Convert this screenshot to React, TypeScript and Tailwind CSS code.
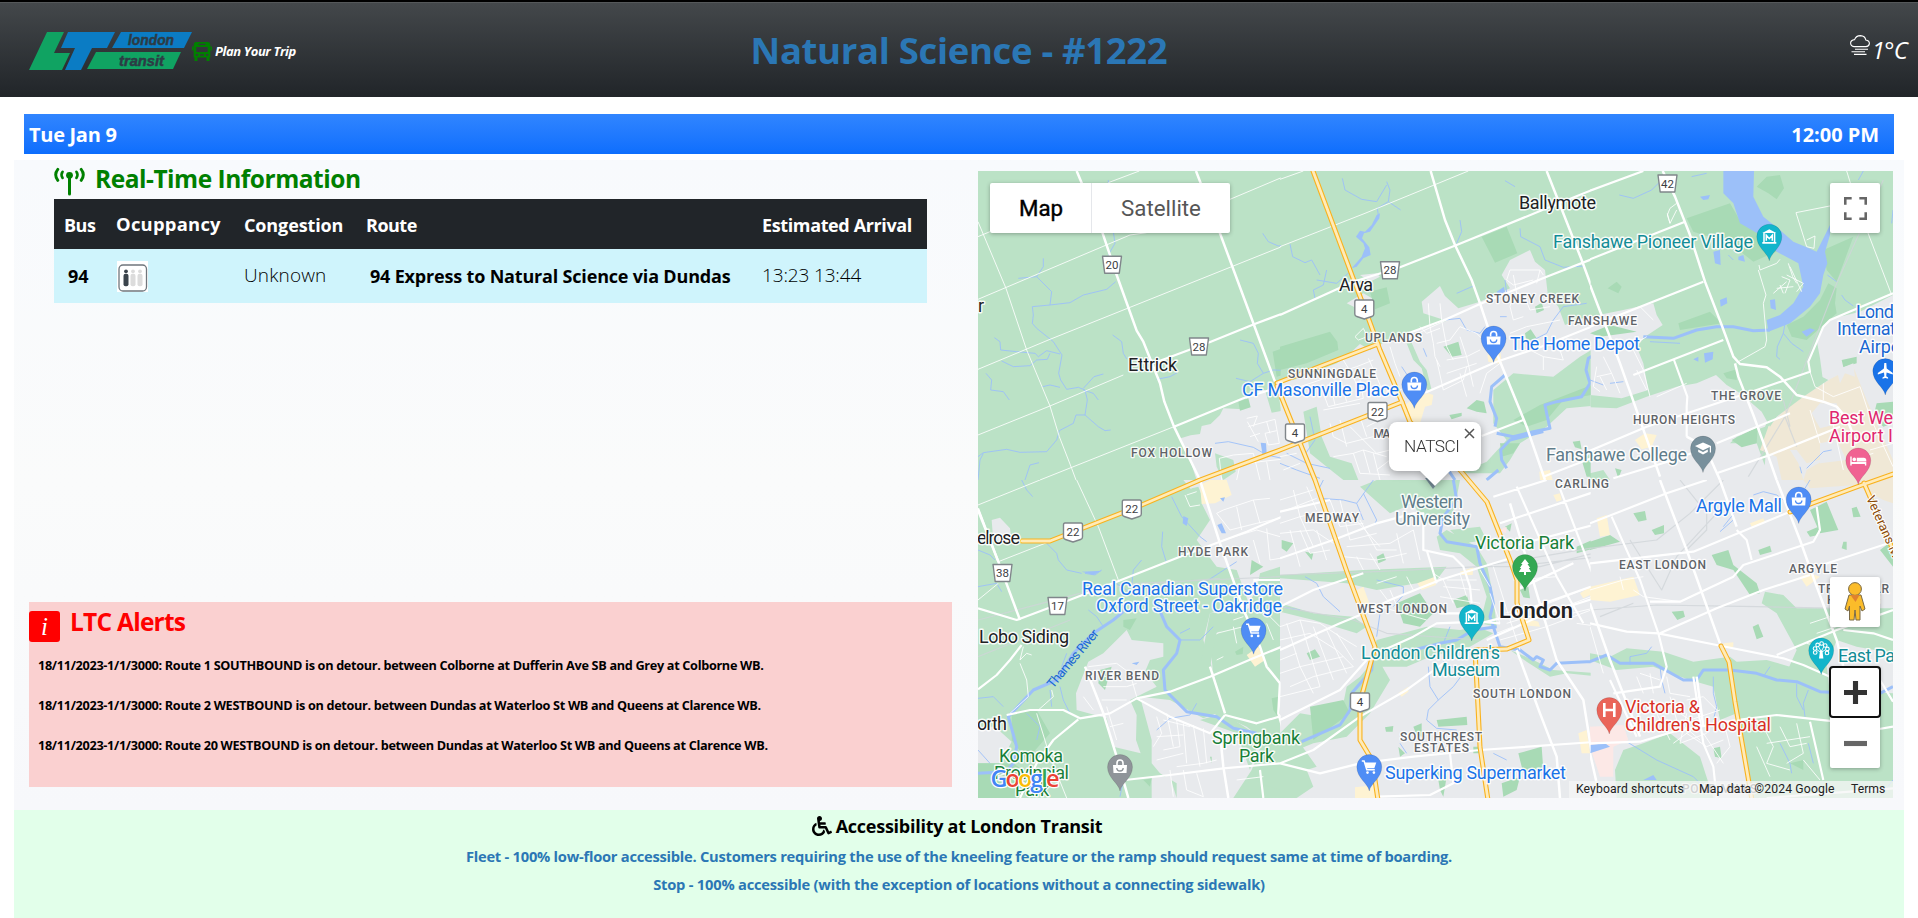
import type { ReactNode } from "react";
import { FaWheelchair } from "react-icons/fa";

/* ---------- Map data: each tile is drawn at 3 units per pixel ---------- */

type Tile = {
  x: number;
  y: number;
  w: number;
  h: number;
  urban?: string;
  green?: string;
  park?: string;
  beige?: string;
  pink?: string;
  sand?: string;
  grey?: string;
  lake?: string;
  river?: string;
  creek?: string;
  rail?: string;
  minor?: string;
  thin?: string;
  mid?: string;
  major?: string;
};

const tiles: Tile[] = [
  {
    x: 970, y: 160, w: 930, h: 960,
    urban: "M632 835L662 826 690 822 695 798 722 792 750 765 760 745 820 748 830 712 860 690 890 690 960 655V960H680L660 900Z",
    green: "M885 690L925 700 950 750 905 758Z M735 880L790 900 797 935 760 960 740 920Z",
    park: "M908 575L960 557V640L920 650Z M805 725L835 715 842 742 810 752Z",
    lake: "M872 848L888 850 890 882 878 886Z",
    thin: "M24 418L480 225 530 218 M24 628L240 538 480 442 960 250 M24 825L240 738 460 645 M210 960L612 800 M24 185L108 385 170 570 240 738 268 830 305 925 318 960 M415 68L508 33 M780 118L960 42 M24 230L60 215",
    creek: "M24 890L40 878 110 868 150 877 230 875 260 840 268 812 310 790 318 765 345 765 385 800 405 812 422 810 M345 765L352 720 345 690 325 682 290 688 272 660 266 640 276 585 250 545 200 505 187 490 190 465 187 440 240 435 300 428 340 405 410 388 437 365 M145 355L200 350 220 320 220 295 M200 350L245 395 240 435 M73 533L90 545 92 570 140 575 195 580 205 590 230 572 270 582 M95 603L130 620 180 617 200 600 232 598 240 580 M48 640L65 660 62 690 100 695 118 720 M428 525L455 545 460 580 470 597 M340 685L372 650 400 642 M340 690L370 700 385 720 M218 680L240 675 270 682 M415 60V70 M415 285L435 250 430 215 M810 540L850 550 865 580 862 610 880 640 840 665 798 655 M880 640L910 630 960 632 M878 220L895 245 925 258 960 250 M165 960L180 915 207 908 M24 960L30 900 40 880 M560 658L600 650 622 638 M735 850L775 845 850 862 890 885 960 900",
    minor: "M830 775L862 768 M832 785L865 845 M862 768L850 800 M835 800L870 790 M870 790L915 778 928 850 895 855 885 820 920 812 M890 785L900 820 M840 830L870 820 M755 960L748 895 790 885 850 880 M800 960L810 915 870 905 960 895 M850 880L870 960 M890 905L900 960 M930 720L940 780 M940 880L960 875",
    mid: "M612 800L820 715 900 690 M550 610L715 548 852 493 960 452",
    major: "M320 33L398 220 440 345 500 512 520 545 570 670 583 725 612 800 690 960 M678 33L750 220 852 495 915 665",
  },
  {
    x: 1280, y: 160, w: 930, h: 960,
    urban: "M0 665L40 660 170 610 215 575 240 552 270 570 295 555 385 520 500 482 430 460 425 425 480 378 495 408 535 445 600 425 690 385 665 345 690 300 750 270 765 305 795 330 803 400 835 440 855 495 960 455V960H0Z M200 430L250 400 285 420 290 435 230 445Z M240 345L290 340 300 350 270 365Z",
    green: "M640 690L700 640 820 650 900 590 960 555V735L860 745 800 800 720 850 690 900 660 940H540L620 905 680 840 640 790Z M70 755L110 740 125 830 150 890 215 910 235 960H190L140 920 90 880Z M380 550L395 548 420 605 440 630 455 690 442 690 425 625 400 600Z",
    park: "M0 560L150 515 172 545 175 570 80 610 0 630Z M270 395L320 382 330 430 285 448Z M605 230L680 200 712 280 645 308Z M490 560L535 545 545 585 515 590Z M735 520L752 508 770 535 740 545Z M560 745L590 720 612 725 620 760 590 755Z M700 780L780 735 960 665V700L850 720 800 780 740 800Z M508 765L545 758 545 768 515 778Z M765 440L785 428 792 450 770 460Z M878 845L900 842 905 868 885 862Z M660 850L720 850 700 880 665 890Z M905 900L960 860V950L920 950Z",
    beige: "M375 735L405 712 445 700 460 705 455 735 435 740 420 790 395 785Z M622 585L662 580 665 612 625 605Z M778 935L810 930 818 960H780Z",
    lake: "M215 325L245 290 255 265 250 250 228 230 240 212 255 215 275 195 290 165 300 160 298 175 270 215 252 220 246 235 268 262 272 285 250 295 230 320Z M650 395L672 380 675 395 655 405Z",
    creek: "M187 55L195 90 245 118 290 125 M295 165L292 145 325 125 362 150 M325 125L330 90 320 65 M290 125L320 75 M30 252L38 290 75 308 95 300 120 345 M140 330L130 375 100 390 105 415 M110 360L170 370 210 335 M540 180L545 215 530 250 M675 62L705 80 M720 205L722 230 780 260 795 300 850 322 915 318 M495 480L540 475 560 510 600 520 615 500 M530 400L580 378 M675 360L680 400 M740 550L800 520 820 480 850 440 920 430 M660 470L680 470 M20 880L80 910 150 925 M365 620L385 650 M90 770L105 840 70 890 M0 910L50 930 120 955 M430 565L440 590",
    river: "M675 645L635 680 630 725 650 775 645 800 M650 820L700 830 760 815 810 805 800 760 795 735 830 725 905 710 930 670 918 630 925 595 960 575 M790 815L690 840 662 870 665 900 680 925 M655 930L620 960 M508 935L525 960",
    minor: "M225 530L250 505 262 530 235 540Z M445 430L450 500 460 550 465 590 480 620 M480 430L485 480 500 560 520 600 M470 550L510 540 540 500 590 520 610 540 M500 600L560 590 600 570 M540 530L560 590 580 680 M420 500L440 520 480 505 M470 600L490 690 550 660 560 620 M500 640L590 610 M560 710L540 640 M600 700L620 640 660 610 M690 330L780 330 790 345 M690 330L680 360 700 375 760 360 M700 345L710 400 M780 330L770 370 M700 400L690 440 700 480 730 470 M730 400L750 450 810 440 M690 520L740 500 790 490 840 480 M700 570L750 570 790 590 850 600 M790 590V630 M850 600L830 540 M60 680L120 660 170 640 230 620 280 600 M190 600L220 650 240 700 M130 700L145 740 250 715 240 660 M150 670L165 735 M180 655L200 725 M265 595L290 650 310 700 M150 790L160 830 200 850 280 830 M180 780L200 860 M210 800L290 880 330 870 M240 770L260 830 M130 750L240 730 M300 780L260 800 M0 890L50 880 M10 930L60 910 M160 890L220 880 250 870 320 890 M220 880L240 940 330 945 M250 870L270 940 M280 880L300 960 M290 930L330 900 M330 560L345 610 360 650 M360 690L400 670 430 660 M400 660L415 700",
    thin: "M0 58L70 33 M0 260L255 160 565 33 M360 545L500 480",
    mid: "M0 465L220 365 360 322 530 255 800 145 960 80 M385 520L500 477 600 432 800 350 960 288 M435 698L650 605 780 562 960 490 M605 828L730 780 M790 950L960 885",
    major: "M452 33L495 180 525 255 575 360 600 430 650 580 740 800 795 960 M800 33L905 300 960 450",
  },
  {
    x: 1590, y: 160, w: 984, h: 960,
    urban: "M0 470L100 450 190 430 200 465 218 495 165 530 140 560 160 610 175 690 95 715 0 705Z M0 742L80 745 170 710 260 680 320 670 378 645 410 675 435 690 520 745 540 765 525 800 440 830 420 850 500 850 540 960H0Z M690 595L680 540 700 500 730 475 810 455 909 405V960H520L535 800 600 720 640 700 700 670Z",
    green: "M660 560L675 640 715 660 640 710 560 770 540 800 515 755 440 690 430 600Z M0 960V940L40 930 60 960Z",
    park: "M290 175L420 130 455 190 520 225 570 270 490 305 420 250 310 215Z M500 80L530 50 570 45 582 85 560 118 535 100Z M53 385L80 365 95 380 85 400Z M265 490L360 455 395 490 270 510Z M700 270L790 230 740 365 710 330Z M715 370L740 385 735 430 740 460 650 540 605 530 590 495 640 470 690 420Z M0 520L60 495 140 515 30 530Z M425 840L503 800 500 850 455 862Z M400 640L440 628 440 660 410 655Z M755 600L800 590 800 610 760 622Z M860 730L909 725V790L880 800 850 770Z M75 925L95 930 85 955Z",
    sand: "M535 800L600 735 720 658 790 620 830 720 909 900V960H575L560 890 510 870Z",
    grey: "M665 760L690 730 740 730 750 790 690 805Z M690 850L740 840 770 900 690 910Z M600 870L620 870 650 910 720 890 650 930 640 960 625 910Z M740 630L790 610 795 650 765 640 750 670Z",
    beige: "M135 840L165 820 200 825 185 860 155 868Z",
    lake: "M400 33H492L490 110 520 170 570 210 610 245 650 262 680 275 720 195V225L705 275 712 310 700 345 690 400 660 440 600 490 535 515 530 480 570 465 610 430 640 380 625 310 560 275 520 230 450 190 430 130 400 100Z M370 275L390 270 392 315 375 310Z M540 420L555 418 558 450 542 445Z M390 420L410 412 412 430 392 440Z M635 515L660 505 675 510 650 530Z M330 110L360 105 355 118 340 120Z M342 580L370 575 368 598 345 608Z M310 598L325 590 325 605Z M445 290L460 285 465 305 445 300Z",
    creek: "M88 105L130 115 185 90 210 65 M305 50L350 40 M415 285L430 300 M585 490L580 520 605 550 640 575 M580 520L562 560 560 590 570 598 M755 405L765 420 790 438 M820 33L805 60 M909 150L905 190 M712 345L740 365 M180 545L270 550 M0 660L40 675 M60 670L100 665 M725 870L700 875 670 905 650 925 M630 920L635 940",
    river: "M160 530L250 535 320 510 380 500 430 500 490 512 540 510",
    rail: "M880 60L740 370 585 770 475 950 M585 770L620 860 M580 720L600 800",
    minor: "M507 315L510 330 560 310 570 298 M595 310L608 350 620 370 M575 350L600 360 585 400 M590 345L640 370 620 395 M560 385L610 380 M570 375L580 400 M600 320L635 395 M550 400L590 365 M760 130L618 158 650 260 672 265 675 228 650 240 M232 160L240 190 232 165 240 145 260 130 M260 150L240 190 M505 330L528 405 520 430 530 540 525 560 440 608 M20 620L10 680 30 695 M40 590L65 640 20 650 M65 640L90 700 M30 650L50 690 M150 440L190 480 M170 530L120 560 M130 570L160 630 180 710 M140 630L170 690 M660 635L675 680 730 710 810 680 M700 670V720 M810 680L840 770 909 920 M660 750L690 850 M720 750L760 930 M780 900L850 880 M840 870L909 850",
    thin: "M770 33L800 130 905 405 M290 670L200 710",
    mid: "M0 92L160 33 M0 298L285 185 M0 500L340 365 M130 645L400 540 M0 872L170 800 500 690 660 635 655 605 700 500 720 480 909 400 M290 830L290 740 292 710 252 600 M380 850L600 760 M70 955L250 900 330 870 M380 940L540 885 750 800",
    major: "M218 33L255 110 300 225 345 365 395 495 430 590 450 612 530 622 570 650 620 705 700 725 740 740 770 775 800 850 M435 610L445 650 490 765 530 875 560 960 M0 375L90 610 210 950 M290 830L345 860 390 960",
  },
  {
    x: 970, y: 480, w: 930, h: 954,
    urban: "M640 0H930V260L870 280 860 330 835 370 720 400 700 480 725 560 765 710 830 740 880 780 845 870 790 954H620V910L570 880 545 850 545 780 510 650 600 660 700 715 740 700 720 480 840 380 800 270 740 260 680 180 720 120 690 60Z M355 545L400 520 440 480 470 450 485 480 580 490 580 530 540 540 525 575 560 620 480 660 500 705 498 780 512 820 430 800 410 715 320 690 318 640Z M24 740H75L125 785 90 850H24Z M65 120L90 113 120 145 125 185 90 190 68 160Z M545 890L600 890 620 954H545Z",
    green: "M720 400L830 390 800 430 740 460 720 560 765 705 740 715 690 560Z M690 720L760 700 870 770 840 870 800 760Z M930 870L850 870 870 910 930 930Z M665 25L685 20 705 70 660 80 645 50Z",
    park: "M125 700L200 690 240 760 170 840 125 780Z M24 850H130L200 900 150 954H24Z M390 570L425 560 405 630 385 610Z M940 180L960 180V210Z M845 240L880 260 840 285Z M795 515L820 500 818 522 800 525Z M905 655L925 650 930 720 910 690Z M460 420L500 415 480 450 460 440Z M720 830H725V850Z M520 900L545 895 540 920Z",
    beige: "M690 15L720 0H770L785 45 735 70 695 72Z M830 525L865 500 885 540 855 560Z",
    lake: "M742 135L755 130 768 160 755 160Z M640 108L655 115 650 138 638 130Z M750 55L765 52 760 65Z M485 550L508 545 500 555Z M335 275L395 272 370 285Z",
    creek: "M155 0L170 30 188 50 M225 185L260 220 265 240 290 270 335 280 M345 280L375 285 395 270 M605 50L635 110 690 170 710 185 M578 155L575 200 590 250 M515 240L490 270 485 320 M24 210L60 225 75 240 M24 320L80 310 95 335 M430 305L470 330 480 350 M355 390L380 410 400 440 M290 520L275 560 M24 655L70 650 100 680 M170 700L210 740 200 780 M560 750L600 715 660 705 680 670 M630 480L690 480 730 440 M630 460L660 445 M270 620L280 660 300 700 M240 630L245 680 M24 810L60 850 M460 900L450 950 M700 310L800 245",
    river: "M24 880L110 875 130 850 140 800 115 710 190 630 260 600 310 520 370 460 430 420 460 395 M560 370L590 440 630 480 620 520 580 570 585 630 650 695 740 710 790 745 860 760",
    rail: "M24 420L330 340 500 310 930 290 M24 530L300 420 M560 310L750 295",
    minor: "M645 45L660 80 690 75 M650 45L680 35 M740 100L760 90 850 60 900 55 M740 100L780 150 860 130 930 115 M800 80L815 150 M850 60L870 130 M760 180L860 150 930 170 M850 180L870 250 M890 145L900 240 930 235 M355 560L440 550 480 580 500 650 M400 620L470 620 500 610 M370 580L410 590 M395 660L470 660 M340 650L370 690 M410 680L440 780 M420 740L460 730 M150 540L170 520 185 525 M150 550L170 600 175 650 120 700 M205 690L250 650 245 630 M560 710L575 760 550 800 M590 700L610 800 M620 720L630 800 580 810 M640 730L650 850 M670 735L690 860 M700 745L710 850 M560 770L640 765 M560 840L640 820 M620 860L700 850 740 840 M580 720L660 740 M790 420L820 410 M860 400L920 385 M890 400L930 440 M740 460L820 440 M790 440L800 490 M890 430L910 480 M740 540L760 530 M760 760L830 790 M800 900L880 890 M600 870L610 950 M640 870L650 930 700 950 M680 880L700 950",
    thin: "M24 75L210 0 M320 0L385 140 445 300 M85 245L340 145 M24 360L85 310 M150 540L160 500 M200 700L240 830 290 954",
    mid: "M24 385L140 420 260 375 440 305 630 230 830 155 960 100 M24 628L80 585 120 540 155 495 M110 705L180 690 280 690 330 715 420 700 500 655 600 635 720 590 850 535 960 490 M500 655L600 710 720 760 765 705 M765 705L860 730 960 700 M325 718L250 780 200 850 150 954 M465 900L600 885 760 865 930 850 M870 870L880 954 M850 300L930 300 M24 85L85 245",
    major: "M24 90L85 245 150 420 M345 560L400 700 440 830 475 954 M690 0L750 190 800 330 825 400 870 500 890 560 930 610 925 700 960 820 M720 560L765 700 M750 760L760 860 775 954",
  },
  {
    x: 1280, y: 480, w: 930, h: 954,
    urban: "M0 0H960V954H0Z",
    green: "M240 20L290 0H540L525 80 500 130 430 130 400 70 330 100Z M470 170L500 150 590 200 620 250 640 350 650 440 600 430 620 350 590 260 540 220 480 210Z M0 285L250 270 500 260 470 300 290 330 200 310 0 295Z M0 370L100 400 220 410 260 440 230 460 100 420 0 395Z M290 480L440 440 540 450 590 440 640 460 570 500 450 530 380 560 290 560 270 540Z M200 620L240 590 290 530 330 600 270 700 200 770 100 790 0 830V760L60 700 180 720Z M0 800L60 790 110 860 80 870 100 920 50 954H0Z M690 510L760 540 820 570 960 580V590L860 580 810 590 740 545Z M510 150L600 140 620 180 550 190Z",
    park: "M5 180L40 190 20 215 5 205Z M75 215L100 220 95 240Z M290 230L310 220 318 240 295 250Z M350 370L420 340 460 400 420 440 370 430Z M520 360L560 345 570 375 530 385Z M80 520L105 508 120 530 90 540Z M90 680L190 660 210 700 100 780Z M470 720L560 710 562 735 475 740Z M315 742L340 738 338 755 318 755Z M400 740L425 730 425 770 410 765Z M715 820L785 800 790 870 730 880Z M720 330L745 320 750 355 730 352Z M580 800H600V820H580Z M675 140L695 130 690 155Z M470 870L500 890 490 950 480 930Z M665 910L720 890 710 930 670 950Z M890 200L960 170V200L890 220Z M355 800L375 820 360 830Z",
    beige: "M230 330L250 320 268 370 255 380 240 360Z M412 310L465 290 468 315 425 330Z M355 640L385 620 385 635 365 650Z M225 922L290 915 295 954H225Z M820 45L840 40 845 60 830 65Z M900 340L960 300V330L910 355Z M720 410L775 425 780 440 720 435Z M540 275L580 262 578 285 545 285Z M895 760L920 750 930 820H905Z",
    pink: "M658 150L680 140 678 160Z M930 740L960 735V880L945 870Z",
    creek: "M130 0L115 30 M120 55L190 60 230 70 280 0 M230 70L250 120 M250 40L290 120 285 130 M75 290L110 310 130 350 180 395 M290 300L370 320 370 345 340 380 M300 400L290 470 M0 380L60 390 M640 820L680 840 M490 545L550 580 520 620 475 660 445 690 440 720 470 745 530 750 M445 560L450 620 475 660 M360 790L380 820 M510 440L490 490",
    river: "M520 0L530 60 490 110 480 160 500 185 590 200 600 250 630 320 640 370 630 410 640 440 M65 785L180 735 210 690 215 640 275 570 280 520 M330 510L400 510 480 490 530 480 580 450 650 440 M640 440L660 500 720 510 760 540 770 530 790 540 780 560 810 570 830 550 920 545 960 545",
    rail: "M0 285L290 275 600 260 960 200 M0 380L220 420 320 460 600 480 M600 260L780 260 960 215 M690 260L960 230",
    minor: "M0 60L100 30 M20 90L110 55 M0 130L60 110 130 95 M40 30L60 110 100 200 M80 20L110 90 M0 160L100 150 160 190 M30 150L60 260 M60 150L90 220 150 210 M110 150L140 240 M150 60L180 140 250 130 M180 60L210 180 290 160 M210 100L300 200 M240 120L290 210 350 210 M200 200L330 190 400 150 M190 230L290 240 380 220 M230 230L250 270 M270 220L300 270 M350 160L370 250 M400 150L420 240 M290 310L350 290 M300 330L330 370 M380 290L400 330 M460 280L490 300 520 370 M540 280L560 350 M0 440L60 420 120 430 180 470 230 500 M0 480L90 460 170 510 220 560 M20 430L60 560 100 640 M60 420L120 620 M100 440L160 600 M140 450L200 580 M170 460L220 540 M0 580L60 560 190 530 M30 620L100 590 220 560 M0 650L120 620 M0 540L50 520 M300 380L440 420 M330 330L360 400 M480 350L600 370 M490 320L600 330 M500 300L590 300 M670 400L720 390 M680 430L780 400 M650 460L700 440 M660 480L800 440 960 380 M690 420L720 510 M720 410L740 480 M630 340L660 430 M600 270L630 320",
    thin: "M640 260L690 420 M700 300L830 290 M720 320L880 250 M790 420L960 380 M800 400L960 340 M780 380L960 310 M890 430L960 440",
    mid: "M0 95L150 60 M0 235L160 180 290 130 400 100 430 100V210L520 230 550 260 570 320 575 370 M0 380L100 330 250 280 M0 510L180 430 240 405 330 360 480 300 690 235 M0 720L180 630 260 540 M0 850L100 810 240 710 380 630 490 550 M0 850L120 880 240 850 400 830 600 810 960 785 M290 520L400 470 470 430 600 425 660 430 M480 400L560 400 M440 210L470 310 M710 20L830 290 910 430 M830 0L960 340 M720 325L880 250 M640 50L800 0 M660 130L960 30 M690 200L960 130 M600 430L680 410 960 310 M620 480L800 400 960 350 M290 950L450 945 520 910 510 820 500 800",
    major: "M710 510L780 700 830 830 840 954 M690 70L830 540 910 660 945 880",
  },
  {
    x: 1590, y: 480, w: 984, h: 954,
    urban: "M0 0H909V954H0Z",
    green: "M515 370L525 335 580 345 620 385 760 385H909V520L800 500 740 480 710 560 720 640 660 640 580 600 620 510 560 400Z M0 520L60 530 110 505 220 515 310 545 420 530 440 545 530 540 600 560 620 600 720 630 909 640V954H490L440 700 390 720 370 620 300 600 240 580 190 560 80 570 0 540Z M160 790L240 760 330 830 370 954H80L75 870 100 810Z",
    park: "M660 90L710 65 745 150 690 160Z M365 225L415 210 430 255 500 310 510 340 480 345 430 270 380 255Z M245 395L280 392 285 410 262 420Z M488 440L505 432 520 470 500 478Z M130 100L165 93 170 120 145 125Z M185 150L222 135 222 160 195 165Z M505 210L540 197 545 215 510 225Z M650 155L685 140 685 165 660 170Z M785 85L800 80 812 110 790 112Z M760 185H770V210L755 205Z M0 185L60 165 90 185 0 210Z M370 805L390 800 395 835 375 830Z M870 210L909 180V260Z M600 850L640 840 640 870Z",
    beige: "M20 115L50 105 60 165 30 170Z M0 320L130 290 150 345 60 365 0 360Z M630 290L660 280 690 290 650 320Z M400 490L430 487 430 500 405 505Z M480 130L520 115 525 125 485 140Z",
    sand: "M640 0H909V70L880 60 800 15 660 25Z",
    pink: "M0 740L100 735 115 780 70 800V890L30 890 0 800Z",
    lake: "M0 795L45 790 60 800 0 820Z M160 900L190 885 200 900Z",
    creek: "M660 0L645 25 M430 120L390 155 M490 45L520 35 560 45 600 75 M185 500L170 520 120 530 120 555 M210 560L215 600 225 640 M370 590V640L380 680 370 720 M620 610L620 650 640 690 M655 630L640 670 645 710 M570 790L600 850 605 880 M655 790L670 850 M800 640V720 M850 650L870 720 M110 785L200 840 310 890 350 930 M520 590L540 560 M870 950L909 900 M440 90L400 140",
    river: "M0 545L50 525 90 550 190 550 280 600 320 600 340 570 420 570 500 580 560 600 620 605 690 635 780 640 870 640 909 620",
    rail: "M0 390L200 375 500 380 760 385 M0 205L200 180 300 100 400 0 M120 180L215 330 260 230 380 100 M30 410L130 370 M270 0L350 100 350 150 290 210",
    minor: "M0 330L100 300 160 290 M90 290L100 330 M130 330L160 350 M660 430L720 410 M680 460L740 440 M650 490L690 500 M290 660L340 650 380 690 M150 580L210 600 M140 590L160 640 M180 580L190 640 M230 590L240 640 300 650 M240 680L300 720 390 690 M200 700L240 780 M240 650L260 720 330 780 M290 700L270 790 350 760 M250 790L330 730 M290 760L350 800 400 780 M400 720L420 800 380 850 M340 760L400 850 M520 740L550 800 530 850 600 870 M570 740L600 800 650 790 M620 730L640 820 590 850 M530 790L660 770 M500 800L540 890 M640 840L690 900",
    thin: "M0 440L40 580 M160 350L270 365 430 290",
    mid: "M0 130L230 40 350 0 M65 110L150 300 205 460 230 560 210 620 70 640 M180 365L270 365 345 330 430 290 460 255 670 185 690 150 680 80 M0 430L110 455 205 460 380 495 580 535 640 555 720 590 M210 460L380 385 520 330 660 285 M0 250L310 215 600 95 M440 150L470 180 485 240 M0 790L150 785 250 755 440 720 560 705 740 725 850 750 909 740 M680 260L909 185 M560 525L740 450 909 390 M760 450L850 460 909 480 M870 600L909 665 M140 770L60 600 M310 590L340 790 370 860 380 954 M660 725L700 900 M530 954L909 925",
    major: "M0 370L60 540 150 770 M210 0L290 210 390 490 M390 0L440 140 M560 0L630 180 680 320 740 480 760 560 M0 820L30 954 M320 590L340 740",
  },
];

const highways = [
  "M1313 171L1353 278 1369 320 1380 350 1402 402 1410 422 1460 470 1487 502 1510 560 1517 580V603L1529 640 1507 649 1475 650 1477 687 1480 747 1488 800",
  "M1277 383L1378 344",
  "M1022 541H1050L1137 507 1200 480 1280 450 1402 402",
  "M1277 386L1300 443 1315 480 1347 572 1375 647 1360 702V740L1372 760 1378 800",
  "M1721 646L1729 662 1735 702 1752 800",
  "M1790 512L1813 503 1862 485 1893 474",
  "M1864 483L1893 550",
];

type Label = [text: string, x: number, baseline: number, width: number, color: string, size?: number, weight?: number];

const dark = "#202124";
const blue = "#1a73e8";
const teal = "#128c96";
const park = "#188038";
const slate = "#607d8b";
const pink = "#e0266e";
const red = "#d93025";
const grey = "#5f6368";

const labels: Label[] = [
  ["Ballymote", 1519, 209, 77, dark],
  ["Arva", 1339, 291, 34, dark],
  ["Ettrick", 1128, 371, 49, dark],
  ["r", 978, 312, 6, dark],
  ["elrose", 977, 544, 43, dark],
  ["Lobo Siding", 979, 643, 90, dark],
  ["orth", 977, 730, 30, dark],
  ["London", 1499, 618, 74, dark, 22, 600],
  ["CF Masonville Place", 1242, 396, 157, blue],
  ["The Home Depot", 1510, 350, 130, blue],
  ["Argyle Mall", 1696, 512, 86, blue],
  ["Real Canadian Superstore", 1082, 595, 201, blue],
  ["Oxford Street - Oakridge", 1096, 612, 186, blue],
  ["Superking Supermarket", 1385, 779, 181, blue],
  ["Fanshawe Pioneer Village", 1553, 248, 200, teal],
  ["London Children's", 1361, 659, 139, teal],
  ["Museum", 1432, 676, 68, teal],
  ["East Pa", 1838, 662, 57, teal],
  ["Victoria Park", 1475, 549, 99, park],
  ["Springbank", 1212, 744, 88, park],
  ["Park", 1239, 762, 35, park],
  ["Komoka", 999, 762, 64, park],
  ["Provincial", 994, 779, 75, park],
  ["Park", 1015, 796, 34, park],
  ["Western", 1401, 508, 62, slate],
  ["University", 1395, 525, 75, slate],
  ["Fanshawe College", 1546, 461, 141, slate],
  ["Best We", 1829, 424, 64, pink],
  ["Airport I", 1829, 442, 64, pink],
  ["Lond", 1856, 318, 38, "#1967d2"],
  ["Internat", 1837, 335, 59, "#1967d2"],
  ["Airpo", 1859, 353, 42, "#1967d2"],
  ["Victoria &", 1625, 713, 75, red],
  ["Children's Hospital", 1625, 731, 146, red],
  ["FOX HOLLOW", 1131, 457, 81, grey],
  ["SUNNINGDALE", 1288, 378, 88, grey],
  ["UPLANDS", 1365, 342, 57, grey],
  ["STONEY CREEK", 1486, 303, 93, grey],
  ["FANSHAWE", 1568, 325, 69, grey],
  ["MA", 1373.5, 438, 17, grey],
  ["THE GROVE", 1711, 400, 70, grey],
  ["HURON HEIGHTS", 1633, 424, 102, grey],
  ["MEDWAY", 1305, 522, 54, grey],
  ["HYDE PARK", 1178, 556, 70, grey],
  ["RIVER BEND", 1085, 680, 74, grey],
  ["WEST LONDON", 1357, 613, 90, grey],
  ["SOUTH LONDON", 1473, 698, 98, grey],
  ["SOUTHCREST", 1400, 741, 82, grey],
  ["ESTATES", 1414, 752, 55, grey],
  ["CARLING", 1555, 488, 54, grey],
  ["EAST LONDON", 1619, 569, 87, grey],
  ["ARGYLE", 1789, 573, 48, grey],
  ["TRAFALGAR", 1818, 593, 71, grey],
  ["HEIGHTS", 1827, 604, 53, grey],
  ["POND MILLS", 1682, 793, 75, grey],
];

function MapLabel({ label }: { label: Label }) {
  const [text, x, y, width, color, size, weight] = label;
  const caps = color === grey;
  return (
    <text
      x={x}
      y={y}
      textLength={width}
      fill={color}
      fontSize={size ?? (caps ? 12 : 18)}
      fontWeight={weight ?? (caps ? 500 : 400)}
      stroke="#fff"
      strokeWidth={caps ? 2.4 : 2.8}
      strokeOpacity={0.9}
      strokeLinejoin="round"
      paintOrder="stroke"
    >
      {text}
    </text>
  );
}

const provincial: [string, number, number][] = [
  ["4", 1364.3, 309], ["4", 1295, 433], ["4", 1360, 702], ["22", 1377.5, 411.5], ["22", 1131.8, 509], ["22", 1073, 532],
];
const county: [string, number, number][] = [
  ["20", 1112, 264.7], ["28", 1199, 346.5], ["28", 1390, 270.3], ["42", 1667.5, 183.5], ["38", 1002.5, 573], ["17", 1057.5, 606],
];

function Shield({ n, x, y, d }: { n: string; x: number; y: number; d: string }) {
  return (
    <g transform={`translate(${x} ${y})`}>
      <path d={d} fill="#fff" stroke="#80868b" strokeWidth={1.4} strokeLinejoin="round" />
      <text y={4} textAnchor="middle" fontSize={11.5} fill="#3c4043">{n}</text>
    </g>
  );
}

const bag = <><path d="M-7-2H7L6.5 6H-6.5Z" fill="#fff" /><path d="M-3-2V-4A3 3 0 0 1 3-4V-2" fill="none" stroke="#fff" strokeWidth={1.6} /></>;
const cart = <><path d="M-7.5-6H-5.2L-2.5 2.8H5.5" fill="none" stroke="#fff" strokeWidth={1.5} /><path d="M-4.6-4.5H7L5 1.3H-2.8Z" fill="#fff" /><circle cx={-1.8} cy={5.6} r={1.3} fill="#fff" /><circle cx={4.6} cy={5.6} r={1.3} fill="#fff" /></>;
const museum = <><path d="M0-7.5L7-3.8H-7Z M-7 5.4H7V7H-7Z" fill="#fff" /><path d="M-5.3-4V6M5.3-4V6M-3 4V-1.4L0 2 3-1.4V4" fill="none" stroke="#fff" strokeWidth={1.5} /></>;

const pins: { x: number; y: number; c: string; icon: ReactNode }[] = [
  { x: 1493.6, y: 338.5, c: "#4f8df5", icon: <>{bag}<path d="M-3.2 1A3.2 3 0 0 0 3.2 1" fill="none" stroke="#4f8df5" strokeWidth={1.3} /></> },
  { x: 1414.3, y: 384.5, c: "#4f8df5", icon: <>{bag}<path d="M-3.2 1A3.2 3 0 0 0 3.2 1" fill="none" stroke="#4f8df5" strokeWidth={1.3} /></> },
  { x: 1798.7, y: 499.5, c: "#4f8df5", icon: <>{bag}<path d="M-3.2 1A3.2 3 0 0 0 3.2 1" fill="none" stroke="#4f8df5" strokeWidth={1.3} /></> },
  { x: 1120, y: 767, c: "#8f9499", icon: <>{bag}<path d="M-3.2 1A3.2 3 0 0 0 3.2 1" fill="none" stroke="#8f9499" strokeWidth={1.3} /></> },
  { x: 1253.6, y: 630.3, c: "#4f8df5", icon: cart },
  { x: 1369.3, y: 767, c: "#4f8df5", icon: cart },
  { x: 1769.3, y: 236.7, c: "#12b5cb", icon: museum },
  { x: 1471.7, y: 617, c: "#12b5cb", icon: museum },
  { x: 1885.3, y: 371, c: "#1a73e8", icon: <path d="M-1-8H1L1.4-2.5 7.5 2V3.6L1.3 1.6 .9 5.2 2.8 6.6V7.8L0 7-2.8 7.8V6.6L-.9 5.2-1.3 1.6-7.5 3.6V2L-1.4-2.5Z" fill="#fff" /> },
  { x: 1858.3, y: 460.5, c: "#f06292", icon: <><path d="M-8-4H-6.6V1.5H8V5H6.6V3.5H-6.6V5H-8Z M-1.5-2.8H5.5Q8-2.8 8 0V1H-1.5Z" fill="#fff" /><circle cx={-4} cy={-1.1} r={1.8} fill="#fff" /></> },
  { x: 1703, y: 448.6, c: "#78909c", icon: <path d="M0-6L8-2.5V4H6.8V-1.5L0 1.7-8-2.5Z M-4.8 1L0 3.3 4.8 1V3.5L0 6-4.8 3.5Z" fill="#fff" /> },
  { x: 1525, y: 567, c: "#34a853", icon: <path d="M0-8L4-3H2.5L5.2 1H3.8L6.2 5H1V8H-1V5H-6.2L-3.8 1H-5.2L-2.5-3H-4Z" fill="#fff" /> },
  { x: 1821.2, y: 650.5, c: "#12b5cb", icon: <><path d="M-2.2 8L-1.2 0H1.2L2.2 8Z" fill="#fff" /><path d="M0 2L-4.5-1M0 1L-3-4.5M0 1L3-4.5M0 2L4.5-1" stroke="#fff" strokeWidth={0.9} />{[[-6, 2], [-6.2, -2], [-3.6, -5.6], [0.4, -7], [4, -5], [6.2, -1.6], [5.8, 2.4]].map(([a, b]) => <circle key={a} cx={a} cy={b} r={1.8} fill="#12b5cb" stroke="#fff" strokeWidth={1.1} />)}</> },
  { x: 1609.3, y: 710, c: "#ea6459", icon: <path d="M-5-7V7M5-7V7M-5 0H5" fill="none" stroke="#fff" strokeWidth={2.6} /> },
];

type LayerKey = Exclude<keyof Tile, "x" | "y" | "w" | "h">;
const fills: [LayerKey, string][] = [
  ["urban", "#e8eaed"], ["sand", "#f0e8d6"], ["green", "#bbe2c6"], ["park", "#a8dab5"], ["beige", "#fef3d3"], ["pink", "#fce8e6"], ["grey", "#e8eaed"], ["lake", "#9cc0f9"],
];
const strokes: [LayerKey, string, number, number][] = [
  ["creek", "#9cc0f9", 3, 0.9], ["river", "#9cc0f9", 9, 1], ["rail", "#d0d4d8", 3.5, 0.8], ["minor", "#fff", 3, 0.85], ["thin", "#fff", 3, 0.85], ["mid", "#fff", 6.5, 1], ["major", "#fff", 7.5, 1],
];

function CityMap() {
  return (
    <svg className="block h-[627px] w-[915px] font-[Roboto,sans-serif]" viewBox="978 171 915 627">
      <defs>
        {tiles.map((t, i) => (
          <clipPath id={`tile-${i}`} key={i}><rect width={t.w + 2} height={t.h + 2} /></clipPath>
        ))}
      </defs>
      <rect x={978} y={171} width={915} height={627} fill="#bbe2c6" />
      {fills.map(([key, color]) => tiles.map((t, i) => t[key] && (
        <g key={key + i} transform={`translate(${t.x} ${t.y}) scale(.33333)`} clipPath={`url(#tile-${i})`}>
          <path d={t[key]} fill={color} />
        </g>
      )))}
      {strokes.map(([key, color, width, opacity]) => tiles.map((t, i) => t[key] && (
        <g key={key + i} transform={`translate(${t.x} ${t.y}) scale(.33333)`} clipPath={`url(#tile-${i})`}>
          <path d={t[key]} fill="none" stroke={color} strokeWidth={width} strokeOpacity={opacity} strokeLinejoin="round" />
        </g>
      )))}
      <g fill="none" strokeLinejoin="round" strokeLinecap="round">
        {highways.map((d) => <path key={d} d={d} stroke="#f9b21e" strokeWidth={5} />)}
        {highways.map((d) => <path key={d} d={d} stroke="#ffebb8" strokeWidth={2.8} />)}
      </g>
      {county.map(([n, x, y]) => <Shield key={n + x} n={n} x={x} y={y} d="M-9.5-8.5H9.5L7.3 8.5H-7.3Z" />)}
      {provincial.map(([n, x, y]) => <Shield key={n + x} n={n} x={x} y={y} d="M-8-9H8Q9.5-9 9.5-7V5Q9.5 7 7.5 7.5L0 10-7.5 7.5Q-9.5 7-9.5 5V-7Q-9.5-9-8-9Z" />)}
      <path d="M1425 478H1442L1433 489Z" fill="#78909c" />
      {pins.map((p) => (
        <g key={p.x} transform={`translate(${p.x} ${p.y})`}>
          <path d="M0 24C-1.5 16-12.5 11-12.5 0A12.5 12.5 0 0 1 12.5 0C12.5 11 1.5 16 0 24Z" fill={p.c} stroke="#000" strokeOpacity={0.18} strokeWidth={0.6} />
          {p.icon}
        </g>
      ))}
      {labels.map((l) => <MapLabel key={l[0] + l[2]} label={l} />)}
      <text transform="translate(1053 689) rotate(-50)" textLength={72} fontSize={13} fill="#1967d2">Thames River</text>
      <text transform="translate(1866 498) rotate(66)" textLength={66} fontSize={13} fill="#8a4b08" stroke="#fff" strokeWidth={2} paintOrder="stroke">Veterans M</text>
      <text x={990.5} y={787} textLength={69} fontSize={23.5} fontWeight={600} stroke="#fff" strokeWidth={2.4} paintOrder="stroke" className="font-['Open_Sans',sans-serif]">
        <tspan fill="#4285f4">G</tspan><tspan fill="#ea4335">o</tspan><tspan fill="#fbbc05">o</tspan><tspan fill="#4285f4">g</tspan><tspan fill="#34a853">l</tspan><tspan fill="#ea4335">e</tspan>
      </text>
    </svg>
  );
}

function MapPanel() {
  return (
    <div className="relative h-[627px] w-[915px] overflow-hidden font-[Roboto,sans-serif]">
      <CityMap />
      <div className="absolute left-3 top-3 flex h-[50px] rounded-xs bg-white text-[22.3px] leading-[50px] shadow-[0_1px_4px_rgba(0,0,0,0.3)]">
        <button className="w-[102px] border-r border-gray-200 pl-px text-center text-black [-webkit-text-stroke:0.4px_#000]">Map</button>
        <button className="w-[138px] text-center text-[#565656]">Satellite</button>
      </div>
      <div className="absolute right-[13px] top-3 flex size-[50px] items-center justify-center rounded-xs bg-white shadow-[0_1px_4px_rgba(0,0,0,0.3)]">
        <svg className="size-[23px]" viewBox="0 0 18 18" fill="#666"><path d="M0 0v6h2V2h4V0H0zm16 0h-4v2h4v4h2V0h-2zm0 16h-4v2h6v-6h-2v4zM2 12H0v6h6v-2H2v-4z" /></svg>
      </div>
      <div className="absolute left-[411px] top-[251px] h-[49px] w-[92px] drop-shadow-[0_2px_4px_rgba(0,0,0,0.35)]">
        <div className="flex h-full items-center rounded-lg bg-white pl-[15px] text-[17.3px] font-light text-[#333]">
          <span className="tracking-[-0.5px]">NATSCI</span>
        </div>
        <svg className="absolute left-[30px] top-[48px] h-[17px] w-[32px]" viewBox="0 0 32 17"><path d="M0 0H32L16 16Z" fill="#fff" /></svg>
        <svg className="absolute right-[6px] top-[6px] size-[11px]" viewBox="0 0 11 11"><path d="M1 1L10 10M10 1L1 10" stroke="#555" strokeWidth={1.5} /></svg>
      </div>
      <div className="absolute right-[13px] top-[406px] flex size-[50px] items-center justify-center rounded-xs bg-white shadow-[0_1px_4px_rgba(0,0,0,0.3)]">
        <svg className="h-[40px] w-[22px]" viewBox="0 0 22 40">
          <g fill="#fbbc2a" stroke="#7a6a45" strokeWidth={1}>
            <path d="M5 13H17L21 27 18 29 16 24V38H12L11 28 10 38H5.5V24L4 29 1 27Z" />
            <circle cx={11} cy={7} r={6.4} />
          </g>
          <path d="M6.5 13H15.5L11.5 20Z" fill="#e0812f" />
        </svg>
      </div>
      <div className="absolute right-[13px] top-[496px] h-[101px] w-[50px] rounded-xs bg-white shadow-[0_1px_4px_rgba(0,0,0,0.3)]">
        <div className="-mx-px -mt-px flex h-[52px] items-center justify-center rounded border-2 border-[#101010]">
          <svg className="size-[23px]" viewBox="0 0 18 18" fill="#333"><path d="M18 7h-7V0H7v7H0v4h7v7h4v-7h7z" /></svg>
        </div>
        <div className="flex h-[50px] items-center justify-center">
          <svg className="size-[23px]" viewBox="0 0 18 18" fill="#666"><path d="M0 7h18v4H0z" /></svg>
        </div>
      </div>
      <div className="absolute bottom-0 right-0 flex h-[17px] w-[324px] items-center bg-[#f5f5f5]/75 pl-[7px] text-[12.2px] leading-[17px] text-[#222]">
        <span className="w-[123px] whitespace-nowrap tracking-[0.12px]">Keyboard shortcuts</span>
        <span className="w-[152px] whitespace-nowrap tracking-[0.14px]">Map data ©2024 Google</span>
        <span>Terms</span>
      </div>
    </div>
  );
}

/* ---------- Page sections ---------- */

function Logo() {
  return (
    <svg className="block h-[38px] w-[163px]" viewBox="0 0 163 38">
      <g fill="#10a362">
        <path d="M18 0H35L25 21H41L33 38H0Z" />
        <path d="M67 20H152L144 37H58Z" />
      </g>
      <g fill="#0b7cc4">
        <path d="M39 0H86L78 16H63L52 38H36L46 16H32Z" />
        <path d="M92 0H163L155 16H83Z" />
      </g>
      <g fill="#2d3b45" stroke="#2d3b45" strokeWidth={0.5} fontSize={15.5} fontStyle="italic" fontWeight={700} className="font-['Liberation_Sans_Narrow','Liberation_Sans',sans-serif]">
        <text x={99} y={13} textLength={46} lengthAdjust="spacingAndGlyphs">london</text>
        <text x={90} y={34} textLength={45} lengthAdjust="spacingAndGlyphs">transit</text>
      </g>
    </svg>
  );
}

function BusIcon() {
  return (
    <svg className="size-5 text-[#008000]" viewBox="0 0 20 20">
      <path d="M4 1H16Q18.3 1.4 18.3 4.5V16.6H1.7V4.5Q1.7 1.4 4 1Z M4.3 6V11H15.7V6Z M6.5 2.7V4H13.5V2.7Z" fill="currentColor" fillRule="evenodd" />
      <path d="M0 5.5H1.5V9.5H0Z M18.5 5.5H20V9.5H18.5Z M2.5 16H5.5V20H2.5Z M14.5 16H17.5V20H14.5Z" fill="currentColor" />
      <path d="M3.8 13H6V14.8H3.8Z M14 13H16.2V14.8H14Z M8 13.2H12V14.8H8Z" fill="#33373a" />
    </svg>
  );
}

function FogIcon() {
  return (
    <svg className="relative -top-[5px] mr-[2px] h-[21px] w-5" viewBox="0 0 20 21" fill="none" stroke="#fff">
      <path d="M4 11.6Q.6 11 .6 8Q.8 5 4.6 4.6Q6 .6 10.4 .6Q15 .8 15.8 5Q19.4 5.6 19.4 8.6Q19 11.4 16 11.6Z" strokeWidth={1.1} />
      <path d="M5 14.2H18M1.5 16.8H15M4 19.4H16.5" strokeWidth={1.1} />
    </svg>
  );
}

function Header() {
  return (
    <header className="grid h-[97px] grid-cols-3 items-center border-t-2 border-black bg-linear-to-b from-[#44484b] to-[#212529] shadow-[inset_0_1px_0_#55585a]">
      <div className="flex items-center pl-[29px] pt-[3px]">
        <Logo />
        <BusIcon />
        <span className="relative top-px ml-[3px] whitespace-nowrap text-[13px] font-bold italic tracking-[-0.4px] text-white">Plan Your Trip</span>
      </div>
      <h1 className="whitespace-nowrap pt-[2px] text-center text-[36.5px] font-bold leading-none tracking-[-0.33px] text-[#2b77b5]">Natural Science - #1222</h1>
      <div className="flex items-center justify-end pr-[11px] pt-px text-white">
        <FogIcon />
        <span className="text-2xl italic leading-none tracking-[-0.8px]">1°C</span>
      </div>
    </header>
  );
}

function AntennaIcon() {
  return (
    <svg className="relative top-px size-[31px]" viewBox="0 0 31 31" fill="none" stroke="#008000" strokeLinecap="round">
      <path d="M3.8 4.4Q-.4 9.5 3.8 15.4M27.2 4.4Q31.4 9.5 27.2 15.4" strokeWidth={2.9} />
      <path d="M8.6 6.8Q6.4 9.7 8.6 13M22.4 6.8Q24.6 9.7 22.4 13" strokeWidth={2.6} />
      <path d="M15.5 11V29" strokeWidth={3} />
      <circle cx={15.5} cy={10.3} r={3.4} fill="#008000" stroke="none" />
    </svg>
  );
}

function OccupancyIcon() {
  return (
    <svg className="size-[31px] bg-white" viewBox="0 0 31 31">
      <rect x={2} y={4} width={27.5} height={26} rx={4} fill="#fff" stroke="#6f767c" strokeWidth={1.3} />
      {["#3b444c", "#dcdcdc", "#dcdcdc"].map((c, i) => (
        <g key={i} fill={c} transform={`translate(${9 + i * 7} 0)`}>
          <circle cy={10.3} r={1.9} />
          <rect x={-2.5} y={12.8} width={5} height={12.4} rx={2} />
        </g>
      ))}
    </svg>
  );
}

const columns = "grid grid-cols-[53px_127px_122px_397px_1fr] items-center pl-[10px] text-lg font-bold leading-none";

function RealTime() {
  return (
    <section className="flex h-[442px] flex-col px-[25px]">
      <div className="flex h-[39px] items-center">
        <AntennaIcon />
        <h2 className="ml-[10px] whitespace-nowrap text-[24.5px] font-bold leading-none tracking-[-0.48px] text-[#008000]">Real-Time Information</h2>
      </div>
      <div className={"h-[50px] bg-[#212529] pt-px text-white " + columns}>
        <span className="tracking-[-0.5px]">Bus</span>
        <span className="-ml-px text-[18.4px] tracking-[0.25px]">Ocuppancy</span>
        <span className="tracking-[-0.12px]">Congestion</span>
        <span className="tracking-[-0.5px]">Route</span>
        <span className="-ml-px whitespace-nowrap tracking-[-0.37px]">Estimated Arrival</span>
      </div>
      <div className={"h-[54px] bg-[#cff4fc] text-black " + columns}>
        <span className="pl-1">94</span>
        <OccupancyIcon />
        <span className="relative -top-px text-[19px] font-light tracking-[0.15px]">Unknown</span>
        <span className="whitespace-nowrap pl-1 tracking-[-0.18px]">94 Express to Natural Science via Dundas</span>
        <span className="relative -top-px -ml-px whitespace-nowrap text-[19px] font-light tracking-[-0.15px]">13:23 13:44</span>
      </div>
    </section>
  );
}

const alerts = [
  "18/11/2023-1/1/3000: Route 1 SOUTHBOUND is on detour. between Colborne at Dufferin Ave SB and Grey at Colborne WB.",
  "18/11/2023-1/1/3000: Route 2 WESTBOUND is on detour. between Dundas at Waterloo St WB and Queens at Clarence WB.",
  "18/11/2023-1/1/3000: Route 20 WESTBOUND is on detour. between Dundas at Waterloo St WB and Queens at Clarence WB.",
];

function Alerts() {
  return (
    <section className="h-[185px] bg-[#fad0d0]">
      <div className="flex h-[43px] items-center">
        <span className="relative top-[3px] flex size-[31px] items-center justify-center rounded-[3px] bg-[#ff0000] font-['Liberation_Serif',serif] text-[25px] italic leading-none text-white">i</span>
        <h2 className="ml-[10px] pb-[2px] text-[24.5px] font-bold leading-none tracking-[-0.75px] text-[#ff0000]">LTC Alerts</h2>
      </div>
      {alerts.map((a) => (
        <p key={a} className="h-10 whitespace-nowrap pl-[9px] text-[12.7px] font-bold leading-10 tracking-[-0.32px] text-black">{a}</p>
      ))}
    </section>
  );
}

export default function App() {
  return (
    <div className="h-[918px] w-[1918px] overflow-hidden bg-white font-['Open_Sans','Noto_Sans',sans-serif]">
      <Header />
      <div className="ml-6 mt-[17px] flex h-10 w-[1870px] items-center justify-between bg-linear-to-b from-[#3085ff] to-[#0d6efd] pl-[5px] pr-[15px] pt-[2px] text-xl font-bold leading-none text-white">
        <span className="tracking-[-0.3px]">Tue Jan 9</span>
        <span className="tracking-[-0.05px]">12:00 PM</span>
      </div>
      <main className="ml-[14px] mt-[6px] flex h-[650px] w-[1890px] bg-linear-to-b from-[#f8fafd] via-[#fafbfb] to-[#f7f8fb] pl-[15px]">
        <div className="w-[923px]">
          <RealTime />
          <Alerts />
        </div>
        <div className="ml-[26px] mt-[11px]">
          <MapPanel />
        </div>
      </main>
      <footer className="ml-[14px] h-[108px] w-[1890px] bg-[#e2ffea] pt-[2px] text-center font-bold text-[#2b77b5]">
        <h3 className="flex h-7 items-center justify-center gap-1 text-lg leading-none tracking-[-0.26px] text-black">
          <FaWheelchair className="-ml-1 size-5" />
          Accessibility at London Transit
        </h3>
        <p className="h-8 text-[14.7px] leading-8 tracking-[-0.25px]">Fleet - 100% low-floor accessible. Customers requiring the use of the kneeling feature or the ramp should request same at time of boarding.</p>
        <p className="h-6 text-[14.7px] leading-6 tracking-[-0.22px]">Stop - 100% accessible (with the exception of locations without a connecting sidewalk)</p>
      </footer>
    </div>
  );
}
